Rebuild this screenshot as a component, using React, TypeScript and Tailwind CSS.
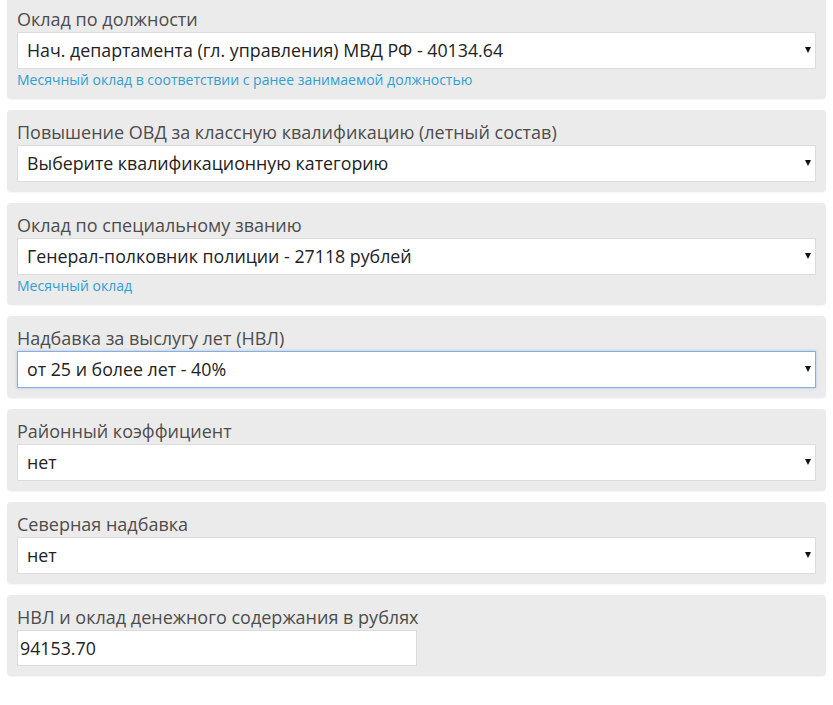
import { useState } from "react";

type Field = {
  label: string;
  options: string[];
  hint?: string;
};

const fields: Field[] = [
  {
    label: "Оклад по должности",
    options: ["Нач. департамента (гл. управления) МВД РФ - 40134.64"],
    hint: "Месячный оклад в соответствии с ранее занимаемой должностью",
  },
  {
    label: "Повышение ОВД за классную квалификацию (летный состав)",
    options: ["Выберите квалификационную категорию"],
  },
  {
    label: "Оклад по специальному званию",
    options: ["Генерал-полковник полиции - 27118 рублей"],
    hint: "Месячный оклад",
  },
  {
    label: "Надбавка за выслугу лет (НВЛ)",
    options: ["от 25 и более лет - 40%"],
  },
  { label: "Районный коэффициент", options: ["нет"] },
  { label: "Северная надбавка", options: ["нет"] },
];

function SelectBox({ options, active }: { options: string[]; active?: boolean }) {
  const [value, setValue] = useState(options[0]);
  return (
    <div className="relative">
      <select
        value={value}
        onChange={(e) => setValue(e.target.value)}
        className={`h-[37px] w-full appearance-none border bg-white pl-[9px] pr-8 text-[17.8px] text-[#222] outline-none ${
          active
            ? "border-[#88ade0] shadow-[0_0_3px_rgba(102,160,233,0.45)]"
            : "border-[#dcdcdc]"
        }`}
      >
        {options.map((o) => (
          <option key={o}>{o}</option>
        ))}
      </select>
      <span className="pointer-events-none absolute right-[5px] top-[15px] h-0 w-0 border-x-[3.5px] border-t-[6px] border-x-transparent border-t-[#111]" />
    </div>
  );
}

export default function App() {
  return (
    <div className="min-h-screen bg-white font-['Open_Sans',sans-serif]">
      <div className="-mt-[3px] flex flex-col gap-[11px] px-[7px]">
        {fields.map((f, i) => (
          <div
            key={f.label}
            className="rounded-[4px] bg-[#ebebeb] p-[10px] shadow-[0_1px_1px_rgba(0,0,0,0.04)]"
          >
            <label className="block h-[25px] text-[18px] leading-[24px] text-[#4d4d4d]">
              {f.label}
            </label>
            <SelectBox options={f.options} active={i === 3} />
            {f.hint && (
              <p className="h-[20px] text-[14px] leading-[21px] text-[#2fa0d2]">{f.hint}</p>
            )}
          </div>
        ))}
        <div className="rounded-[4px] bg-[#ebebeb] p-[10px] shadow-[0_1px_1px_rgba(0,0,0,0.04)]">
          <label className="block h-[25px] text-[18px] leading-[24px] text-[#4d4d4d]">
            НВЛ и оклад денежного содержания в рублях
          </label>
          <input
            readOnly
            value="94153.70"
            className="h-[36px] w-[400px] border border-[#dcdcdc] bg-white px-[2px] text-[17.8px] text-[#222] outline-none"
          />
        </div>
      </div>
    </div>
  );
}
